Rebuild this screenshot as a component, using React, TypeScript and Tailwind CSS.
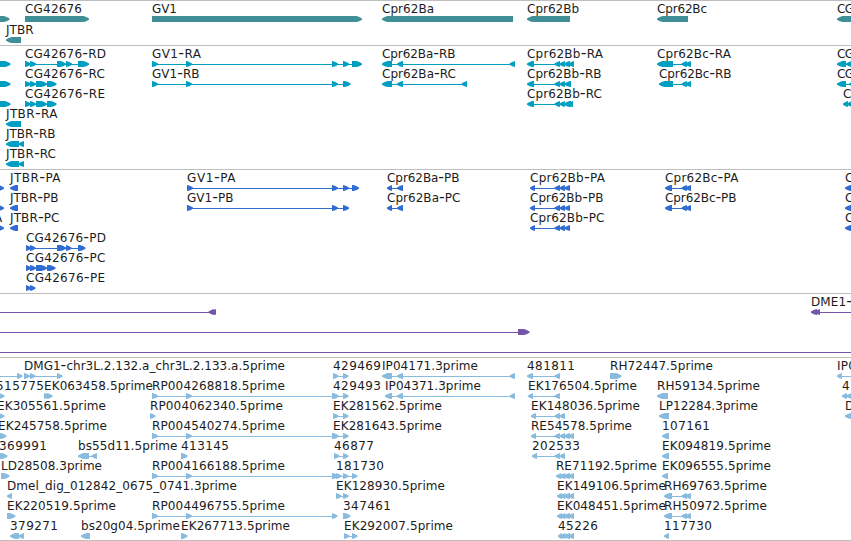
import React from 'react';

type Direction = 'fwd' | 'rev';

interface Feature {
  label?: string;
  // left edge and advance width of the label
  x: number;
  width?: number;
  direction: Direction;
  exons: [number, number][];
}

interface TrackData {
  id: string;
  color: string;
  rowClass: string;
  className: string;
  rows: Feature[][];
}

const VIEW_WIDTH = 851;
const OFF_LEFT = -20;
const OFF_RIGHT = 880;

const fwd = (label: string, x: number, width: number, ...exons: [number, number][]): Feature => ({
  label, x, width, direction: 'fwd', exons,
});

const rev = (label: string, x: number, width: number, ...exons: [number, number][]): Feature => ({
  label, x, width, direction: 'rev', exons,
});

const tracks: TrackData[] = [
  {
    id: 'genes',
    color: '#408f96',
    rowClass: 'h-[21px]',
    className: 'pb-[2px]',
    rows: [
      [
        fwd('', 0, 0, [OFF_LEFT, 9.5]),
        fwd('CG42676', 25, 57, [25, 89]),
        fwd('GV1', 152, 25, [152, 362]),
        rev('Cpr62Ba', 382, 52, [382, 513]),
        rev('Cpr62Bb', 527, 52, [527, 570]),
        rev('Cpr62Bc', 657, 50, [657, 688]),
        rev('CG', 837, 17, [837, OFF_RIGHT]),
      ],
      [rev('JTBR', 6, 27.5, [6, 21])],
    ],
  },
  {
    id: 'transcripts',
    color: '#009fc1',
    rowClass: 'h-5',
    className: 'pb-[3px]',
    rows: [
      [
        fwd('', 0, 0, [OFF_LEFT, 10.5]),
        fwd('CG42676-RD', 25, 81, [25, 31], [30, 36], [57, 66], [66, 72], [78, 89]),
        fwd('GV1-RA', 152, 49, [152, 158], [186, 192], [332, 338], [343, 349], [352, 362]),
        rev('Cpr62Ba-RB', 382, 73.5, [382, 392], [397, 403], [509.5, 515]),
        rev('Cpr62Bb-RA', 527, 76, [527, 534], [554.5, 560], [559.5, 565], [564, 570], [568.5, 574]),
        rev('Cpr62Bc-RA', 657, 74, [657, 673], [681.5, 687], [685.5, 691]),
        rev('CG', 837, 17, [837, 846], [846, OFF_RIGHT]),
      ],
      [
        fwd('', 0, 0, [OFF_LEFT, 10.5]),
        fwd('CG42676-RC', 25, 80, [25, 31], [30, 36], [36, 47], [47, 56.5]),
        fwd('GV1-RB', 152, 47.5, [152, 158], [186, 192], [332, 338], [343, 350.5]),
        rev('Cpr62Ba-RC', 382, 74, [382, 392], [397, 403], [461.5, 467]),
        rev('Cpr62Bb-RB', 527, 74.5, [527, 534], [554.5, 560], [559.5, 565], [564.5, 571]),
        rev('Cpr62Bc-RB', 659, 72.5, [659, 673], [681.5, 687], [685.5, 691]),
        rev('CG', 837, 17, [837, 846], [849, OFF_RIGHT]),
      ],
      [
        fwd('', 0, 0, [OFF_LEFT, 10.5]),
        fwd('CG42676-RE', 25, 80, [25, 31], [30, 36], [36, 47], [47, 56.5]),
        rev('Cpr62Bb-RC', 527, 75, [527, 534], [554.5, 560], [559.5, 565], [564, 571], [568, 573]),
        rev('CG', 843, 17, [843, 848], [847, OFF_RIGHT]),
      ],
      [rev('JTBR-RA', 6, 51.5, [6, 21])],
      [rev('JTBR-RB', 6, 49.5, [6, 19], [18.5, 24])],
      [rev('JTBR-RC', 6, 50, [6, 19], [18.5, 24])],
    ],
  },
  {
    id: 'proteins',
    color: '#316dd1',
    rowClass: 'h-5',
    className: 'pb-[3px]',
    rows: [
      [
        fwd('', 0, 0, [OFF_LEFT, 4]),
        rev('JTBR-PA', 10, 50.5, [10, 18]),
        fwd('GV1-PA', 187, 48.5, [187, 193], [332, 338], [343, 349], [352, 359]),
        rev('Cpr62Ba-PB', 387, 72.5, [387, 392], [397, 403]),
        rev('Cpr62Bb-PA', 530, 75, [530, 535], [554.5, 560], [559.5, 565], [564.5, 570]),
        rev('Cpr62Bc-PA', 665, 73.5, [665, 672], [681.5, 687], [685.5, 691]),
        rev('CG', 845, 17, [845, OFF_RIGHT]),
      ],
      [
        fwd('', 0, 0, [OFF_LEFT, 4]),
        rev('JTBR-PB', 10, 48.5, [10, 18]),
        fwd('GV1-PB', 187, 46.5, [187, 193], [332, 338], [343, 349]),
        rev('Cpr62Ba-PC', 387, 73.5, [387, 392], [397, 403]),
        rev('Cpr62Bb-PB', 530, 73.5, [530, 535], [554.5, 560], [559.5, 565], [564.5, 570]),
        rev('Cpr62Bc-PB', 665, 71.5, [665, 672], [681.5, 687], [685.5, 691]),
        rev('CG', 845, 17, [845, OFF_RIGHT]),
      ],
      [
        fwd('A', -6, 8, [OFF_LEFT, 4]),
        rev('JTBR-PC', 10, 49.5, [10, 18]),
        rev('Cpr62Bb-PC', 530, 74.5, [530, 535], [554.5, 560], [559.5, 565], [564.5, 570]),
        rev('CG', 845, 17, [845, OFF_RIGHT]),
      ],
      [fwd('CG42676-PD', 26, 80, [26, 31], [30, 35.5], [57, 66], [66, 71.5], [78, 85.5])],
      [fwd('CG42676-PC', 26, 79.5, [26, 31], [30, 36], [36, 47], [47, 55.5])],
      [fwd('CG42676-PE', 26, 79, [26, 31], [30, 35.5])],
    ],
  },
  {
    id: 'noncoding',
    color: '#7356a9',
    rowClass: 'h-5',
    className: 'pb-[3px]',
    rows: [
      [
        rev('', 0, 0, [OFF_LEFT, -10], [208.5, 214], [211, 216]),
        rev('DME1-', 811, 41, [811, 817], [815, 820], [870, OFF_RIGHT]),
      ],
      [fwd('', 0, 0, [OFF_LEFT, -10], [518, 529.5])],
      [fwd('', 0, 0, [OFF_LEFT, -10], [870, OFF_RIGHT])],
    ],
  },
  {
    id: 'ests',
    color: '#88bbdd',
    rowClass: 'h-5',
    className: 'pb-[2px]',
    rows: [
      [
        fwd('', 0, 0, [OFF_LEFT, -10], [17, 22.5]),
        fwd('DMG1-chr3L.2.132.a_chr3L.2.133.a.5prime', 24, 261, [24, 30], [30, 35.5], [57, 62.5]),
        fwd('429469', 333, 48, [333, 338.5], [343, 348.5]),
        rev('IP04171.3prime', 382, 96, [382, 392], [397, 403], [509.5, 515]),
        rev('481811', 527, 48, [527, 533], [554.5, 560]),
        fwd('RH72447.5prime', 610, 103, [610, 621.5]),
        rev('IP0', 837, 19, [837, 842], [870, OFF_RIGHT]),
      ],
      [
        fwd('515775', -4, 48, [OFF_LEFT, 4.5]),
        fwd('EK063458.5prime', 44, 109, [44, 48.5], [46.5, 52.5]),
        fwd('RP004268818.5prime', 152, 133, [152, 158], [186, 192], [332, 338.5]),
        fwd('429493', 333, 48, [333, 338.5], [343, 348.5]),
        rev('IP04371.3prime', 385, 96, [385, 392], [397, 403], [509.5, 515]),
        rev('EK176504.5prime', 528, 109, [528, 533], [554.5, 560]),
        rev('RH59134.5prime', 657, 103, [657, 668]),
        rev('4', 842, 8, [842, 847], [846.5, OFF_RIGHT]),
      ],
      [
        fwd('EK305561.5prime', -3, 109, [OFF_LEFT, 4.5]),
        fwd('RP004062340.5prime', 150, 133, [150, 155.5]),
        fwd('EK281562.5prime', 333, 109, [333, 338.5], [343, 348.5]),
        rev('EK148036.5prime', 531, 109, [531, 536], [554.5, 560], [559.5, 565]),
        rev('LP12284.3prime', 659, 99, [659, 669]),
        rev('D', 845, 9, [845, OFF_RIGHT]),
      ],
      [
        fwd('EK245758.5prime', -2, 109, [OFF_LEFT, 6.5]),
        fwd('RP004540274.5prime', 152, 133, [152, 158], [186, 192], [332, 338.5]),
        fwd('EK281643.5prime', 333, 109, [333, 338.5], [343, 348.5]),
        rev('RE54578.5prime', 531, 101, [531, 536], [554.5, 560], [559.5, 565], [564, 570], [568.5, 574]),
        rev('107161', 662, 48, [662, 669]),
      ],
      [
        fwd('369991', -1, 48, [OFF_LEFT, 7.5]),
        rev('bs55d11.5prime', 78, 99.5, [78, 89], [91.5, 97]),
        fwd('413145', 181, 48, [181, 187.5]),
        fwd('46877', 334, 40, [334, 339.5], [343, 348.5]),
        rev('202533', 532, 48, [532, 537], [554.5, 560], [559.5, 565]),
        rev('EK094819.5prime', 662, 109, [662, 669]),
      ],
      [
        fwd('LD28508.3prime', 1, 101, [1, 9.5]),
        fwd('RP004166188.5prime', 152, 133, [152, 158], [186, 192], [332, 338.5]),
        fwd('181730', 336, 48, [336, 341.5], [343, 348.5], [352, 357.5]),
        rev('RE71192.5prime', 556, 101, [556, 561.5], [560, 565.5], [564, 570], [568.5, 574]),
        rev('EK096555.5prime', 662, 109, [662, 668]),
      ],
      [
        rev('Dmel_dig_012842_0675_0741.3prime', 7, 230, [7, 12]),
        fwd('EK128930.5prime', 336, 109, [336, 341.5], [343, 348.5]),
        rev('EK149106.5prime', 557, 109, [557, 562], [560, 565.5], [564, 570], [568.5, 574]),
        rev('RH69763.5prime', 664, 103, [664, 672], [681.5, 687], [685.5, 691]),
      ],
      [
        fwd('EK220519.5prime', 7, 109, [7, 15.5]),
        fwd('RP004496755.5prime', 152, 133, [152, 158], [186, 192], [332, 337.5]),
        fwd('347461', 343, 48, [343, 350.5]),
        rev('EK048451.5prime', 557, 109, [557, 562], [560, 565.5], [564, 570], [568.5, 574]),
        rev('RH50972.5prime', 664, 103, [664, 672], [681.5, 687], [685.5, 691]),
      ],
      [
        rev('379271', 10, 48, [10, 19], [18.5, 24]),
        rev('bs20g04.5prime', 81, 99, [81, 90]),
        fwd('EK267713.5prime', 181, 109, [181, 187.5]),
        fwd('EK292007.5prime', 344, 109, [344, 349.5], [352, 357.5]),
        rev('45226', 558, 40, [558, 562], [560, 565.5], [564, 570], [568.5, 574]),
        rev('117730', 664, 48, [664, 669]),
      ],
    ],
  },
];

// block with a blunt arrow head on its leading end
const exonPoints = ([start, end]: [number, number], direction: Direction) => {
  const head = Math.min(5.5, end - start);
  const tip = direction === 'fwd' ? end : start;
  const tail = direction === 'fwd' ? start : end;
  const back = direction === 'fwd' ? -1 : 1;
  const neck = tip + back * head;
  const shoulder = tip + back * head * 0.5;
  return [
    `${tail},15`,
    `${neck},15`,
    `${shoulder},16.1`,
    `${tip},17.6`,
    `${tip},18.8`,
    `${shoulder},20.2`,
    `${neck},21`,
    `${tail},21`,
  ].join(' ');
};

// hyphens are set larger than the rest of the name
const Label = ({ text }: { text: string }) => (
  <>
    {text.split(/(-)/).map((part, i) =>
      part === '-' ? (
        <tspan key={i} className="text-[16px]">-</tspan>
      ) : (
        part
      )
    )}
  </>
);

const FeatureGlyph = ({ feature, color }: { feature: Feature; color: string }) => {
  const { label, x, width, direction, exons } = feature;
  const first = exons[0];
  const last = exons[exons.length - 1];

  return (
    <g>
      {exons.length > 1 && (
        <rect
          x={first[0] + 2}
          y={18}
          width={last[1] - first[0] - 4}
          height={1}
          fill={color}
          shapeRendering="crispEdges"
        />
      )}
      {exons.map((exon, i) => (
        <polygon key={i} points={exonPoints(exon, direction)} fill={color} />
      ))}
      {label && (
        <text x={x} y={12} textLength={width} className="fill-[#1c1c1c]">
          <Label text={label} />
        </text>
      )}
    </g>
  );
};

const Track = ({ track }: { track: TrackData }) => (
  <section className={`border-b border-[#bebebe] ${track.className}`}>
    {track.rows.map((row, i) => (
      <div key={i} className={track.rowClass}>
        <svg
          width={VIEW_WIDTH}
          height={22}
          className="block overflow-visible font-['DejaVu_Sans',sans-serif] text-[12px]"
        >
          {row.map((feature, j) => (
            <FeatureGlyph key={j} feature={feature} color={track.color} />
          ))}
        </svg>
      </div>
    ))}
  </section>
);

export default function App() {
  return (
    <main className="w-[851px] h-[541px] overflow-hidden bg-white border-t border-[#bebebe]">
      {tracks.map((track) => (
        <Track key={track.id} track={track} />
      ))}
    </main>
  );
}
